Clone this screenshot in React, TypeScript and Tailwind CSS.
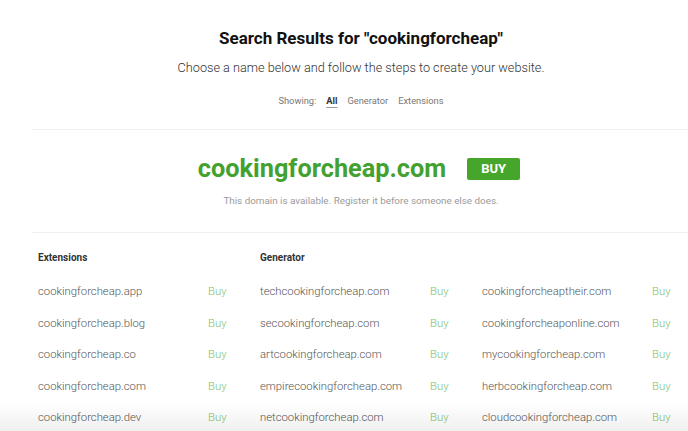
const extensions = [
  "cookingforcheap.app",
  "cookingforcheap.blog",
  "cookingforcheap.co",
  "cookingforcheap.com",
  "cookingforcheap.dev",
];

const generatorA = [
  "techcookingforcheap.com",
  "secookingforcheap.com",
  "artcookingforcheap.com",
  "empirecookingforcheap.com",
  "netcookingforcheap.com",
];

const generatorB = [
  "cookingforcheaptheir.com",
  "cookingforcheaponline.com",
  "mycookingforcheap.com",
  "herbcookingforcheap.com",
  "cloudcookingforcheap.com",
];

function DomainColumn({ title, names }: { title: string; names: string[] }) {
  return (
    <div className="w-[222px] shrink-0 pl-[6px]">
      <div className="h-[14px] text-[10px] leading-[14px] font-bold text-[#333]">{title}</div>
      <div className="mt-[12px]">
        {names.map((name) => (
          <div key={name} className="flex h-[31.5px] items-center text-[11.3px] font-light">
            <span className="w-[170px] text-[#555]">{name}</span>
            <span className="text-[#84c267]">Buy</span>
          </div>
        ))}
      </div>
    </div>
  );
}

export default function App() {
  return (
    <div className="relative h-[431px] w-[688px] overflow-hidden bg-white font-['Roboto',sans-serif]">
      <div className="ml-[32px] w-[658px] shrink-0">
        <div className="pt-[27px] text-center">
          <h1 className="text-[17px] leading-[22px] font-bold text-[#111]">
            Search Results for "cookingforcheap"
          </h1>
          <p className="mt-[9px] text-[12.7px] leading-[20px] font-light text-[#333]">
            Choose a name below and follow the steps to create your website.
          </p>
          <div className="mt-[16px] flex justify-center gap-[10px] text-[9.3px] leading-[14px] text-[#777]">
            <span>Showing:</span>
            <span className="font-bold text-[#333] underline underline-offset-[3px] decoration-[#999]">All</span>
            <span>Generator</span>
            <span>Extensions</span>
          </div>
        </div>

        <div className="mt-[21px] h-px bg-[#f2f2f2]" />

        <div className="mt-[24px] flex items-center justify-center gap-[21px] pr-[4px]">
          <span className="text-[25.3px] leading-[30px] font-bold text-[#43a12f]">cookingforcheap.com</span>
          <button className="h-[22px] w-[53px] rounded-[2px] bg-[#46a62c] text-[13px] font-bold text-white">
            BUY
          </button>
        </div>
        <p className="mt-[10px] text-center text-[9.85px] leading-[14px] text-[#9a9a9a]">
          This domain is available. Register it before someone else does.
        </p>

        <div className="mt-[24px] h-px bg-[#f0f0f0]" />

        <div className="mt-[18px] flex">
          <DomainColumn title="Extensions" names={extensions} />
          <DomainColumn title="Generator" names={generatorA} />
          <DomainColumn title="" names={generatorB} />
        </div>
      </div>

      <div className="pointer-events-none absolute inset-x-0 bottom-0 h-[28px] bg-gradient-to-b from-transparent to-[#00000010]" />
    </div>
  );
}
